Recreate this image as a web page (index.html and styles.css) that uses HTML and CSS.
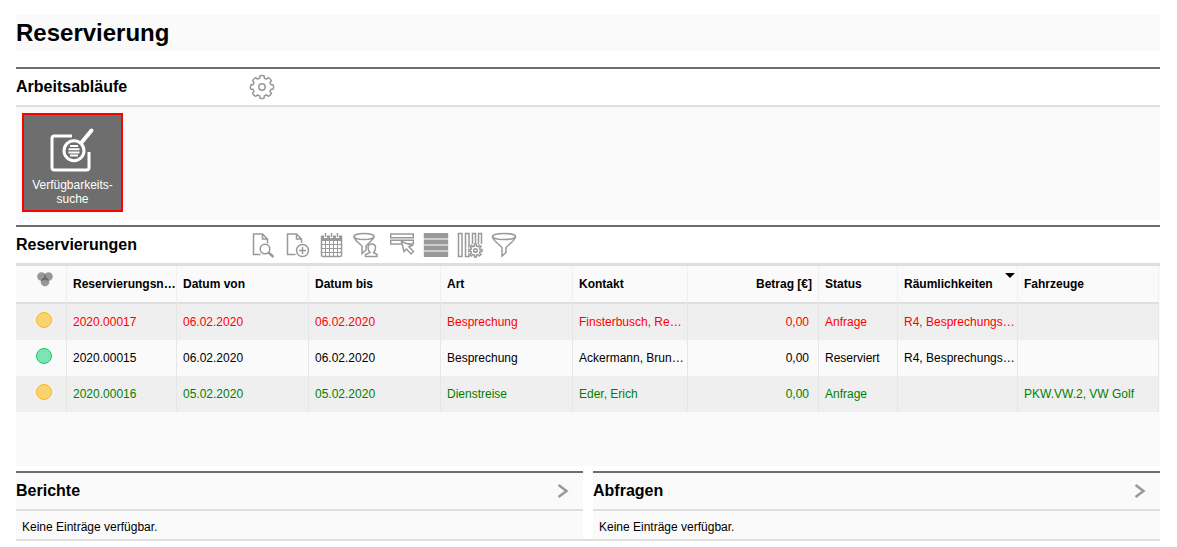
FILE: index.html
```html
<!DOCTYPE html>
<html lang="de">
<head>
<meta charset="utf-8">
<title>Reservierung</title>
<link rel="stylesheet" href="styles.css">
</head>
<body>
<main class="page">
  <h1 class="page-title">Reservierung</h1>

  <section class="section workflows">
    <header class="section-head">
      <h2 class="section-title">Arbeitsabläufe</h2>
      <div class="toolbar">
        <button class="tool" type="button" aria-label="Einstellungen">
          <svg class="icon" viewBox="2 0 26 26"><path d="M10.6 4.2L11 1.8Q13 1 15 1.8L15.4 4.2Q16.4 4.4 17.4 5L19.4 3.6Q21.400 4.600 22.400 6.600L21 8.600Q21.600 9.600 21.800 10.600L24.200 11Q25 13 24.200 15L21.800 15.400Q21.600 16.400 21 17.400L22.400 19.400Q21.400 21.400 19.400 22.400L17.400 21Q16.400 21.600 15.400 21.800L15 24.200Q13 25 11 24.200L10.600 21.800Q9.600 21.600 8.600 21L6.600 22.400Q4.600 21.400 3.600 19.400L5 17.400Q4.400 16.400 4.200 15.400L1.800 15Q1 13 1.800 11L4.200 10.600Q4.400 9.600 5 8.600L3.600 6.600Q4.600 4.600 6.600 3.600L8.600 5Q9.600 4.400 10.600 4.200Z"/><circle cx="13" cy="13" r="3.2"/></svg>
        </button>
      </div>
    </header>
    <div class="tiles">
      <button class="tile" type="button">
        <svg class="tile-icon" viewBox="0 0 46 46"><path d="M22 10H4.500Q2 10 2 12.500V41.500Q2 44 4.500 44H36.500Q39 44 39 41.500V26"/><circle cx="24" cy="24.700" r="10"/><path class="lines" d="M20 20H28M18.500 23.200H29.500M18.500 26.400H29.500M20 29.600H28"/><path class="grip" d="M31.500 16.500L41.500 4.500"/></svg>
        <span>Verfügbarkeits-<br>suche</span>
      </button>
    </div>
  </section>

  <section class="section bookings">
    <header class="section-head">
      <h2 class="section-title">Reservierungen</h2>
      <div class="toolbar">
        <button class="tool" type="button" aria-label="Anzeigen">
          <svg class="icon" viewBox="1 0 26 26"><path d="M10.500 22.500H3.500V2H12.500L17.500 7V11.500M12.500 2V7H17.500"/><circle cx="15" cy="17" r="4.800"/><path class="thick" d="M18.500 20.500L23.500 25"/></svg>
        </button>
        <button class="tool" type="button" aria-label="Neu">
          <svg class="icon" viewBox="1 0 26 26"><path d="M11.500 22.500H3.500V2H12.500L17.500 7V11M12.500 2V7H17.500"/><circle cx="18.500" cy="18.500" r="6"/><path d="M18.500 15V22M15 18.500H22"/></svg>
        </button>
        <button class="tool" type="button" aria-label="Kalender">
          <svg class="icon" viewBox="0 0 26 26"><path d="M2.500 4V23Q2.500 24.500 4 24.500H21Q22.500 24.500 22.500 23V4"/><path class="fill" d="M2 3.500H23V9H2Z"/><path class="hole" d="M5 2H8V6H5ZM11 2H14V6H11ZM17 2H20V6H17Z"/><path d="M6.500 1V5M12.500 1V5M18.500 1V5"/><path class="thin" d="M6.500 9V24M10.500 9V24M14.500 9V24M18.500 9V24M3 12.500H22M3 16.500H22M3 20.500H22"/></svg>
        </button>
        <button class="tool" type="button" aria-label="Benutzerfilter">
          <svg class="icon" viewBox="0 0 26 26"><ellipse cx="11" cy="4.500" rx="10" ry="3"/><path d="M1 4.500Q1.500 7 3.500 9L9 14V21.500L13 18V14L18 9Q20.500 7 21 4.500"/><path class="halo" d="M12.500 24.500V22.500L17 20.500Q15 18.500 15 15.500Q15.300 12 18.800 12T22.500 15.500Q22.500 18.500 20.500 20.500L24 22.500V24.500Z"/></svg>
        </button>
        <button class="tool" type="button" aria-label="Auswahl">
          <svg class="icon" viewBox="-2 0 26 26"><path d="M1.700 2H24.300V5.700H1.700ZM1.700 8.300H24.300V12H1.700Z"/><path class="halo" d="M12.500 9.500L15 19.500L17.500 17L22 22L24.500 19.500L20 15L23 13.500Z"/></svg>
        </button>
        <button class="tool" type="button" aria-label="Zeilen">
          <svg class="icon" viewBox="-2 0 26 26"><path class="fill" d="M.8 1H25.200V6.500H.8ZM.8 7.500H25.200V12.500H.8ZM.8 13.500H25.200V18.500H.8ZM.8 19.500H25.200V25H.8Z"/></svg>
        </button>
        <button class="tool" type="button" aria-label="Spalten konfigurieren">
          <svg class="icon" viewBox="-2 0 26 26"><path d="M1.500 1.500H5V24.500H1.500ZM8.500 1.500H12V24.500H8.500ZM15.500 12V1.500H18.500V12M21.500 12V1.500H24.500V12"/><circle class="hole" cx="18.500" cy="18.500" r="7.200"/><path d="M17.500 14L17.500 12H19.500V14L21 14.600L22.500 13.200L24 14.600L22.600 16L23 17.500H25V19.500H23L22.600 21L24 22.500L22.500 24L21 22.500L19.500 23V25H17.500V23L16 22.500L14.500 24L13 22.500L14.400 21L14 19.500H12V17.500H14L14.400 16L13 14.600L14.500 13.200L16 14.600Z"/><circle cx="18.500" cy="18.500" r="1.800"/></svg>
        </button>
        <button class="tool" type="button" aria-label="Filter">
          <svg class="icon" viewBox="-2 0 26 26"><ellipse cx="13" cy="4.500" rx="11.500" ry="3"/><path d="M1.500 4.500Q2 7 4 9L11 15.500V24L15 20.500V15.500L22 9Q24 7 24.500 4.500"/></svg>
        </button>
      </div>
    </header>
    <div class="grid-area">
      <table class="grid">
        <colgroup>
          <col class="w-mark"><col class="w-number"><col class="w-date"><col class="w-date"><col class="w-date">
          <col class="w-contact"><col class="w-amount"><col class="w-status"><col class="w-rooms"><col>
        </colgroup>
        <thead>
          <tr>
            <th class="mark" aria-label="Ampel"><svg class="venn" viewBox="0 0 16 15"><circle cx="4.500" cy="4.500" r="4.300"/><circle cx="11.500" cy="4.500" r="4.300"/><circle cx="8" cy="10" r="4.300"/></svg></th>
            <th>Reservierungsnummer</th>
            <th>Datum von</th>
            <th>Datum bis</th>
            <th>Art</th>
            <th>Kontakt</th>
            <th class="amount">Betrag [€]</th>
            <th>Status</th>
            <th class="sorted" aria-sort="descending">Räumlichkeiten</th>
            <th>Fahrzeuge</th>
          </tr>
        </thead>
        <tbody>
          <tr class="red">
            <td class="mark"><span class="dot yellow"></span></td>
            <td>2020.00017</td><td>06.02.2020</td><td>06.02.2020</td><td>Besprechung</td><td>Finsterbusch, Renate</td>
            <td class="amount">0,00</td><td>Anfrage</td><td>R4, Besprechungsraum</td><td></td>
          </tr>
          <tr>
            <td class="mark"><span class="dot mint"></span></td>
            <td>2020.00015</td><td>06.02.2020</td><td>06.02.2020</td><td>Besprechung</td><td>Ackermann, Brunhilde</td>
            <td class="amount">0,00</td><td>Reserviert</td><td>R4, Besprechungsraum</td><td></td>
          </tr>
          <tr class="green">
            <td class="mark"><span class="dot yellow"></span></td>
            <td>2020.00016</td><td>05.02.2020</td><td>05.02.2020</td><td>Dienstreise</td><td>Eder, Erich</td>
            <td class="amount">0,00</td><td>Anfrage</td><td></td><td>PKW.VW.2, VW Golf</td>
          </tr>
        </tbody>
      </table>
    </div>
  </section>

  <div class="pair">
    <section class="section panel">
      <header class="section-head">
        <h2 class="section-title">Berichte</h2>
        <button class="more" type="button" aria-label="Berichte öffnen"><svg class="chevron" viewBox="0 0 12 14"><path d="M1.500 1L9.500 7L1.500 13"/></svg></button>
      </header>
      <p class="empty">Keine Einträge verfügbar.</p>
    </section>
    <section class="section panel">
      <header class="section-head">
        <h2 class="section-title">Abfragen</h2>
        <button class="more" type="button" aria-label="Abfragen öffnen"><svg class="chevron" viewBox="0 0 12 14"><path d="M1.500 1L9.500 7L1.500 13"/></svg></button>
      </header>
      <p class="empty">Keine Einträge verfügbar.</p>
    </section>
  </div>
</main>
</body>
</html>
```
FILE: styles.css
```css
* {
  box-sizing: border-box;
}

body {
  margin: 0;
  background: #fff;
  color: #000;
  font: 12px/14px "Liberation Sans", Arial, sans-serif;
}

button {
  border: 0;
  padding: 0;
  background: none;
  color: inherit;
  font: inherit;
  cursor: pointer;
}

.page {
  padding: 15px 17px 6px 16px;
}

.page-title {
  margin: 0 0 16px;
  background: #fafafa;
  font-size: 24px;
  line-height: 36px;
}

.section {
  border-top: 2px solid #6e6e6e;
}

.section-head {
  display: flex;
  align-items: center;
  height: 38px;
  border-bottom: 2px solid #dedede;
}

.section-title {
  width: 229px;
  margin: 0;
  font-size: 16px;
  line-height: 20px;
}

.toolbar {
  display: flex;
  gap: 8px;
  padding-left: 6px;
}

.tool {
  width: 26px;
  height: 26px;
}

.icon {
  display: block;
  width: 26px;
  height: 26px;
  overflow: visible;
  fill: none;
  stroke: #999;
  stroke-width: 1.5;
}

.icon .thick {
  stroke-width: 2.5;
}

.icon .thin {
  stroke-width: 1;
}

.icon .fill {
  fill: #999;
  stroke: none;
}

.icon .hole {
  fill: #fff;
  stroke: none;
}

.icon .halo {
  fill: #fff;
}

.workflows {
  margin-bottom: 5px;
}

.tiles {
  display: flex;
  padding: 6px 6px 8px;
  background: #fafafa;
}

.tile {
  display: flex;
  flex-direction: column;
  align-items: center;
  width: 101px;
  height: 99px;
  padding-top: 11px;
  border: 2px solid #f00;
  background: #6e6e6e;
  color: #fff;
}

.tile-icon {
  width: 46px;
  height: 46px;
  margin-bottom: 6px;
  fill: none;
  stroke: #fff;
  stroke-width: 3;
}

.tile-icon .lines {
  stroke-width: 2;
}

.tile-icon .grip {
  stroke-width: 4;
  stroke-linecap: round;
}

.bookings {
  margin-bottom: 5px;
}

.bookings .section-head {
  height: 39px;
  border-bottom-width: 3px;
}

.grid-area {
  padding: 0 1px 54px 0;
  background: #fafafa;
}

.grid {
  width: 100%;
  table-layout: fixed;
  border-collapse: separate;
  border-spacing: 0;
}

.w-mark { width: 51px; }
.w-number { width: 110px; }
.w-date { width: 132px; }
.w-contact { width: 115px; }
.w-amount { width: 131px; }
.w-status { width: 79px; }
.w-rooms { width: 120px; }

.grid th,
.grid td {
  height: 36px;
  padding: 0 0 0 6px;
  border-right: 1px solid #e6e6e6;
  overflow: hidden;
  text-align: left;
  text-overflow: ellipsis;
  white-space: nowrap;
}

.grid th {
  height: 38px;
  border-right-color: #f0f0f0;
  border-bottom: 2px solid #dedede;
}

.grid td {
  padding-right: 1px;
}

.grid tbody tr:nth-child(odd) {
  background: #efefef;
}

.grid .amount {
  padding-right: 6px;
  text-align: right;
}

.grid td.amount {
  padding-right: 9px;
}

.grid .mark {
  padding: 8px 0 0 20px;
  vertical-align: top;
}

.grid th.mark {
  padding: 6px 0 0 21px;
}

.venn {
  display: block;
  width: 16px;
  height: 15px;
  fill: #333;
  fill-opacity: 0.5;
}

.dot {
  display: block;
  width: 16px;
  height: 16px;
  border: 1px solid;
  border-radius: 50%;
}

.yellow {
  border-color: #fdb913;
  background: #fad272;
}

.mint {
  border-color: #12c971;
  background: #80e3b3;
}

.red {
  color: #f00;
}

.green {
  color: #008000;
}

.sorted {
  position: relative;
}

.sorted::after {
  content: "";
  position: absolute;
  top: 7px;
  right: 2px;
  border: 5px solid transparent;
  border-top-color: #000;
  border-bottom: 0;
}

.pair {
  display: grid;
  grid-template-columns: 1fr 1fr;
  column-gap: 10px;
  border-bottom: 2px solid #dedede;
}

.panel {
  background: #fafafa;
}

.panel .section-head {
  justify-content: space-between;
  padding-right: 13px;
}

.more {
  width: 14px;
  height: 18px;
}

.chevron {
  display: block;
  width: 12px;
  height: 14px;
  margin: auto;
  fill: none;
  stroke: #999;
  stroke-width: 2.5;
}

.empty {
  margin: 0;
  padding: 9px 6px 5px;
}
```
